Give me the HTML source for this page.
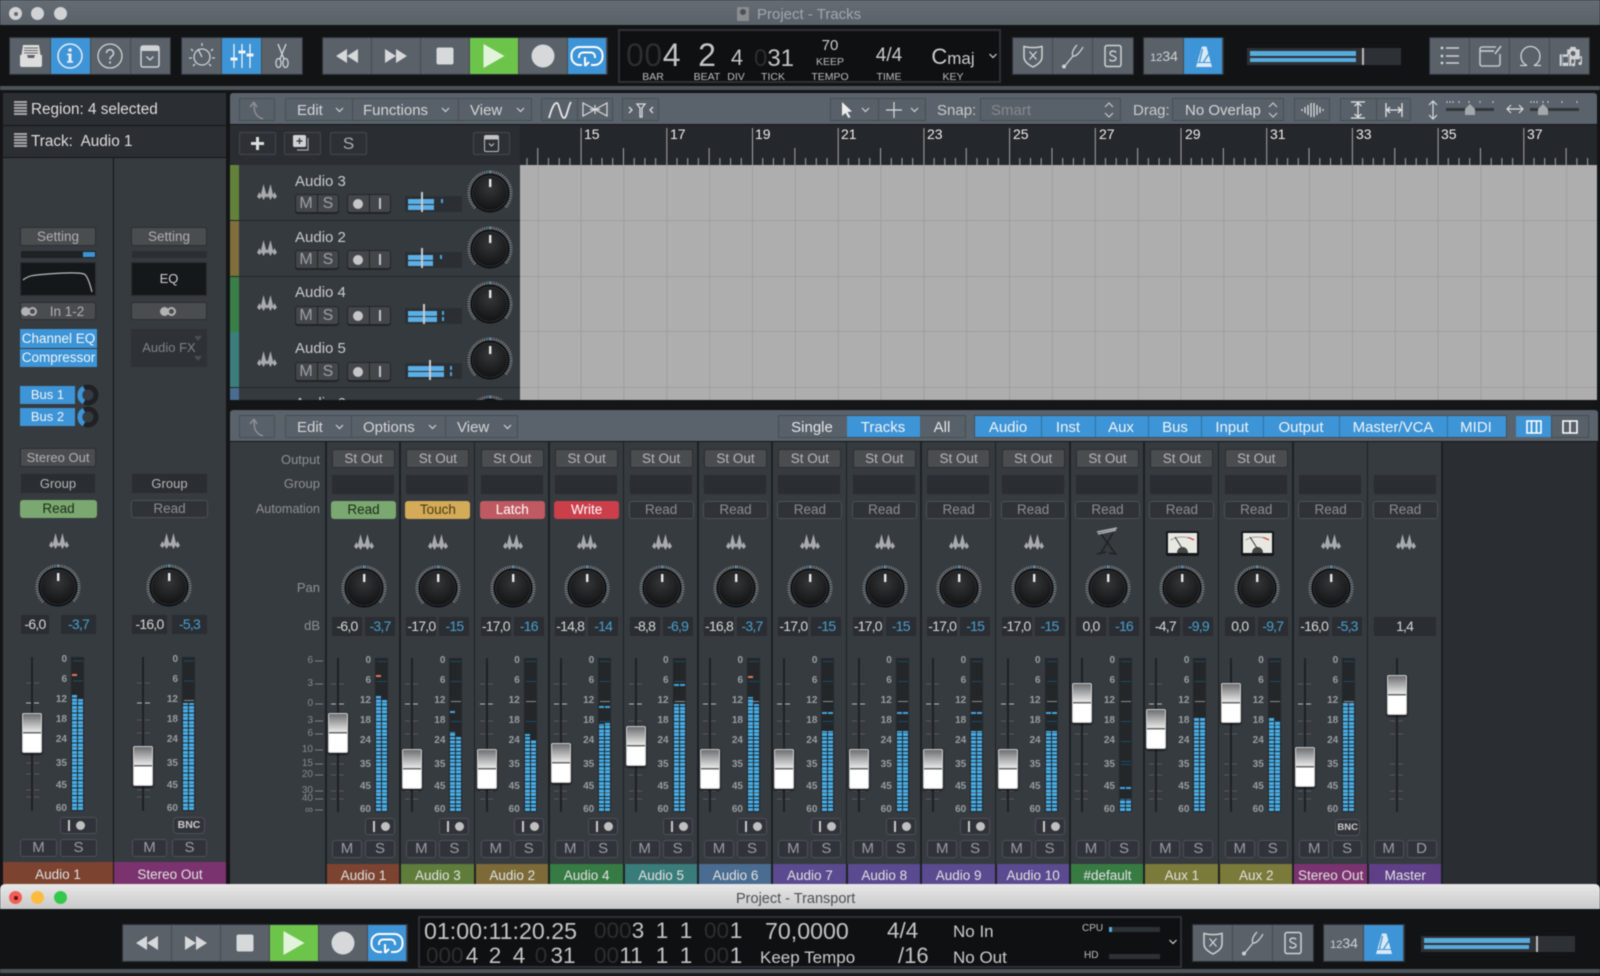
<!DOCTYPE html>
<html><head><meta charset="utf-8"><title>Project - Tracks</title>
<style>
html,body{margin:0;padding:0;width:1600px;height:976px;overflow:hidden;background:#141517;font:13px "Liberation Sans",sans-serif;color:#bbb}
body{filter:blur(.4px)}
div,span,svg,b,i{position:absolute;display:block;box-sizing:border-box}
i{font-style:normal}
svg{overflow:visible}
.t{white-space:nowrap;line-height:1}
.c{transform:translateX(-50%)}
.d{color:#2c2e30}
.g{background:#5a6169;box-shadow:0 0 0 1px #2e3135}
.b{top:0;bottom:0;border-right:1px solid #454b52}
.bl{background:#3d94d6}
.gn{background:#6cc54a}
.bar{background:#5a626b}
.tg{background:#586069;border:1px solid #474d54;height:23px}
.sp{top:0;bottom:0;width:1px;background:#474d54}
.lb{font-size:15px;color:#d5d7d9;line-height:1;white-space:nowrap}
.cb{background:#2d3135;border:1px solid #43484d;border-radius:2px}
.r{background:#363b40;height:1px}
.ch{top:0;width:74px;height:0}
.out{left:6px;top:449px;width:63px;height:19px;background:#4a4d50;border:1px solid #2b2e31;border-radius:2px;text-align:center;line-height:17px;color:#b6b8ba;font-size:13.5px}
.grp{left:6px;top:475px;width:62px;height:19px;background:#2a2e32}
.au{left:5px;top:501px;width:65px;height:18px;border-radius:3px;text-align:center;line-height:18px;font-size:13.5px}
.rd0{background:#2f3337;box-shadow:inset 0 0 0 1px #4b5055;color:#8a8e92}
.rd{background:#7aa870;color:#1c2b18}
.to{background:#d4ab58;color:#4c3a12}
.la{background:#bf5a62;color:#fff}
.wr{background:#cb3f4a;color:#fff}
.wv{left:28px;top:534px;width:20px;height:16px}
.kn{left:15px;top:565px;width:46px;height:46px}
.db{top:617px;height:19px;background:#2a2e32;text-align:center;line-height:19px;font-size:14px;letter-spacing:-.8px}
.a1{left:6px;width:30px;color:#d6d8da}
.a2{left:39px;width:30px;color:#4a9fd0}
.fl{left:11px;top:658px;width:2px;height:154px;background:#1e2124}
.ft{left:4px;top:658px;width:16px;height:154px}
.cap{left:2px;width:20px;height:40px;border-radius:2px;border:1px solid #cfcfcf;background:linear-gradient(#6e6f71 0,#e8e8e8 47%,#66686a 48%,#66686a 51%,#fff 52%,#fff 100%);box-shadow:0 1px 2px #000}
.sc{left:0;top:0;width:45px;height:0}
.sc i{right:0;font-size:10px;font-weight:bold;color:#9a9ea2;line-height:10px;top:656px}
.sc i:nth-child(2){top:676px}.sc i:nth-child(3){top:696px}.sc i:nth-child(4){top:716px}.sc i:nth-child(5){top:736px}.sc i:nth-child(6){top:760px}.sc i:nth-child(7){top:782px}.sc i:nth-child(8){top:805px}
.m{left:49px;top:658px;width:13px;height:154px;background:#23272a}
.m b{left:1px;width:5px;bottom:1px;background:repeating-linear-gradient(to top,#4aaee6 0 2.8px,#1a2a35 2.8px 3.75px)}
.m b.rr{left:7px}
.m svg{left:0;top:0;width:13px;height:154px}
.p{left:1px;width:5px;height:2px;background:#46a4dc}
.p.rr{left:7px}
.p.red{background:#e8745e}
.ir{left:39px;top:818px;width:30px;height:17px;background:#30343a;border:1px solid #4c5156;border-radius:3px}
.ir::before{content:"";position:absolute;left:7px;top:2px;width:2px;height:11px;background:#c8c8c8}
.ir::after{content:"";position:absolute;left:15px;top:3px;width:9px;height:9px;border-radius:50%;background:#c0c0c0}
.ms{top:840px;width:30px;height:18px;background:#30343a;border:1px solid #4c5156;border-radius:3px;text-align:center;line-height:16px;font-size:15px;color:#999da1}
.mm{left:6px}.ss{left:39px}
.lbl{left:0;top:864px;width:74px;height:20px;text-align:center;line-height:24px;color:#e2e2e2;font-size:13.5px;border-left:1px solid #222}
.dv{top:442px;width:2px;height:442px;background:#1e2023}
.bnc{background:#30343a;border:1px solid #4c5156;border-radius:4px;text-align:center;font-weight:bold;font-size:10.5px;color:#ccc;line-height:15px}
.row{left:239px;width:281px;height:55px;background:#353a3f}
.rs{left:230px;width:9px;height:55px}
.tn{font-size:15px;color:#c9cbcd;line-height:1;white-space:nowrap}
.pb{background:#43474c;border:1px solid #222528;border-radius:3px;box-shadow:0 1px 0 #0006}
.tf{left:405px;width:57px;height:16px;background:#2b2f33}
.tf u{position:absolute;left:3px;height:5px;background:#5caee6;display:block}
.tm{width:2px;height:4px;background:#4aa4dc}
.ins{left:20px;background:#4a4d50;border:1px solid #2b2e31;border-radius:2px;text-align:center;color:#aeb0b2;font-size:13.5px}
.bbl{background:#3d94d6;color:#eef5fa;text-align:center;font-size:14px}
.lab2{font-size:13px;color:#8d9195;right:0;text-align:right;line-height:1;white-space:nowrap}
</style></head><body>
<svg width="0" height="0" style="left:0;top:0">
<defs>
<radialGradient id="kg" cx="50%" cy="35%" r="65%"><stop offset="0" stop-color="#343638"/><stop offset="1" stop-color="#121314"/></radialGradient>
<symbol id="wave" viewBox="0 0 20 16"><path fill="#a8abae" d="M0 12.500L2.500 8l2 4.500-2 2.500zM3.800 11L6.500 0l3 11-3 5zM8.800 12l1.200-3 1.200 3-1.200 2zM10.500 11L13.500 0l2.700 11-2.700 5zM15.500 12.500L17.500 8l2.500 4.500L17.500 15z"/></symbol>
<symbol id="knob" viewBox="0 0 46 46"><path d="M8.150 37.850A21 21 0 1 1 37.850 37.850" fill="none" stroke="#85898d" stroke-width="3.200" stroke-dasharray="1 1.300"/><rect x="22.300" y="0.500" width="1.400" height="3.500" fill="#4a9fd0"/><circle cx="23" cy="23" r="19.500" fill="#0b0c0d"/><circle cx="23" cy="23" r="17.500" fill="url(#kg)" stroke="#3b3d3f" stroke-width=".6"/><rect x="22" y="9" width="2.400" height="8" fill="#e8e8e8"/></symbol>
<symbol id="chev" viewBox="0 0 9 6"><path d="M1 1l3.500 3.500L8 1" fill="none" stroke="#cfd2d5" stroke-width="1.200"/></symbol>
<symbol id="ud" viewBox="0 0 10 18"><path d="M1 6l4-4 4 4M1 12l4 4 4-4" fill="none" stroke="#c4c7ca" stroke-width="1.200"/></symbol>
<symbol id="back" viewBox="0 0 24 24"><path d="M9 4L5 9M9 4l3 5M9 4c0 8 0 14 9 17" fill="none" stroke="#8b9096" stroke-width="1.500"/></symbol>
<symbol id="rew" viewBox="0 0 28 28"><path fill="#d6d8da" d="M14 7v14L3 14zM25 7v14l-11-7z"/></symbol>
<symbol id="ff" viewBox="0 0 28 28"><path fill="#d6d8da" d="M3 7v14l11-7zM14 7v14l11-7z"/></symbol>
<symbol id="stop" viewBox="0 0 28 28"><rect x="5.500" y="5.500" width="17" height="17" rx="2" fill="#d6d8da"/></symbol>
<symbol id="play" viewBox="0 0 28 28"><path d="M3.500 2v24l21-12z" fill="#e2f3dc"/></symbol>
<symbol id="rec" viewBox="0 0 28 28"><circle cx="14" cy="14" r="11.500" fill="#d6d8da"/></symbol>
<symbol id="loop" viewBox="0 0 34 24"><path d="M12 21H9.500a8 8 0 0 1-8-8V11a8 8 0 0 1 8-8h15a8 8 0 0 1 8 8v2a8 8 0 0 1-8 8H21" fill="none" stroke="#fff" stroke-width="2"/><path d="M9 14v-1.500a4 4 0 0 1 4-4h8a4 4 0 0 1 4 4V14M15 13v9M15 22l4-4" fill="none" stroke="#fff" stroke-width="2"/></symbol>
<symbol id="shield" viewBox="0 0 28 28"><path d="M5 4.500c6 1.500 12 1.500 18 0V15c0 5-5 8-9 10-4-2-9-5-9-10z" fill="none" stroke="#d0d3d6" stroke-width="1.500"/><path d="M10.500 9.500l7 8M17.500 9.500l-7 8" stroke="#d0d3d6" stroke-width="1.300"/></symbol>
<symbol id="fork" viewBox="0 0 28 28"><path d="M5 25l9-11M14 14c-2-3 1-8 4-11M14 14c3 1 8-5 10-9" fill="none" stroke="#cfd2d5" stroke-width="1.300"/><circle cx="5" cy="24.500" r="2" fill="#cfd2d5"/></symbol>
<symbol id="sq" viewBox="0 0 28 28"><rect x="6" y="3.500" width="16" height="21" rx="2" fill="none" stroke="#d0d3d6" stroke-width="1.500"/><path d="M17 10.500c-1-2-6-2-6 1s6 2 6 5-5.500 3-6.500 1" fill="none" stroke="#d0d3d6" stroke-width="1.400"/></symbol>
<symbol id="metro" viewBox="0 0 28 28"><path d="M12 4.500L6 25h16L16.500 4.500z" fill="#d9e9f6"/><path d="M12.500 7l-3 13M13.500 20L22 7" stroke="#3d94d6" stroke-width="1.300" fill="none"/><path d="M7 20.500h14" stroke="#3d94d6" stroke-width="1"/></symbol>
</defs></svg>

<!-- main title bar -->
<div style="left:0;top:0;width:1600px;height:25px;background:linear-gradient(#656c74,#5a6169)"></div>
<div style="left:0;top:25px;width:1600px;height:61px;background:#121314"></div>
<div style="left:0;top:86px;width:1600px;height:4px;background:#4d5359"></div>
<div style="left:9px;top:7px;width:13px;height:13px;border-radius:50%;background:#d0d2d4"></div><div style="left:13.500px;top:11.500px;width:4px;height:4px;border-radius:50%;background:#66696c"></div>
<div style="left:31px;top:7px;width:13px;height:13px;border-radius:50%;background:#d0d2d4"></div>
<div style="left:54px;top:7px;width:13px;height:13px;border-radius:50%;background:#d0d2d4"></div>
<div style="left:737px;top:7px;width:12px;height:14px;background:#8a8d90;border-radius:1px"></div><div style="left:740px;top:9px;width:6px;height:6px;background:#4d5054;border-radius:50%"></div>
<div class="t" style="left:757px;top:7px;font-size:15px;color:#a3a7ab">Project - Tracks</div>

<!-- toolbar left -->
<div class="g" style="left:10px;top:38px;width:160px;height:36px">
<div class="b" style="left:0;width:41px"></div><div class="b bl" style="left:41px;width:40px"></div><div class="b" style="left:81px;width:40px"></div>
</div>
<svg style="left:17px;top:42px;width:28px;height:28px" viewBox="0 0 28 28"><path d="M6 3h16l1.500 10h-19z" fill="#ddd"/><path d="M7 6h14M7 8.500h14M7 11h14" stroke="#666"/><path d="M3 13h7l1 3h6l1-3h7v10a2 2 0 0 1-2 2H5a2 2 0 0 1-2-2z" fill="#ddd"/></svg>
<svg style="left:56px;top:42px;width:28px;height:28px" viewBox="0 0 28 28"><circle cx="14" cy="14" r="12" fill="none" stroke="#e4edf5" stroke-width="1.500"/><circle cx="14" cy="8" r="1.800" fill="#e4edf5"/><path d="M11 11.500h4.500V19H17v1.800h-6V19h1.500v-5.700H11z" fill="#e4edf5"/></svg>
<svg style="left:96px;top:42px;width:28px;height:28px" viewBox="0 0 28 28"><circle cx="14" cy="14" r="12" fill="none" stroke="#cfd2d5" stroke-width="1.300"/><path d="M10.500 11a3.500 3.500 0 1 1 5.500 3c-1.200.8-2 1.500-2 3.500" fill="none" stroke="#cfd2d5" stroke-width="1.500"/><circle cx="14" cy="20.500" r="1.100" fill="#cfd2d5"/></svg>
<svg style="left:136px;top:42px;width:28px;height:28px" viewBox="0 0 28 28"><rect x="5" y="4" width="18" height="21" rx="2" fill="none" stroke="#cfd2d5" stroke-width="1.500"/><rect x="5" y="4" width="18" height="5" fill="#cfd2d5"/><path d="M10.500 14.500l3.500 3.500 3.500-3.500" fill="none" stroke="#cfd2d5" stroke-width="1.300"/></svg>

<div class="g" style="left:182px;top:38px;width:120px;height:36px">
<div class="b" style="left:0;width:40px"></div><div class="b bl" style="left:40px;width:40px"></div>
</div>
<svg style="left:188px;top:42px;width:28px;height:28px" viewBox="0 0 28 28"><circle cx="14" cy="15" r="8" fill="none" stroke="#cfd2d5" stroke-width="1.300"/><path d="M14 15L10 7M14 1v3M3 7l2 2M25 7l-2 2M1 16h3M24 16h3M5 24l2-2M23 24l-2-2" stroke="#cfd2d5" stroke-width="1.300"/></svg>
<svg style="left:228px;top:42px;width:28px;height:28px" viewBox="0 0 28 28"><path d="M6 2v24M14 2v24M22 2v24" stroke="#f0f4f8" stroke-width="1.300"/><path d="M2.500 17h7M10.500 10h7M18.500 13h7" stroke="#f0f4f8" stroke-width="3"/></svg>
<svg style="left:268px;top:42px;width:28px;height:28px" viewBox="0 0 28 28"><path d="M10 2l6 15M18 2l-6 15" stroke="#cfd2d5" stroke-width="1.400"/><ellipse cx="10.500" cy="21" rx="2.600" ry="4.500" fill="none" stroke="#cfd2d5" stroke-width="1.300"/><ellipse cx="17.500" cy="21" rx="2.600" ry="4.500" fill="none" stroke="#cfd2d5" stroke-width="1.300"/></svg>

<div class="g" style="left:323px;top:38px;width:284px;height:36px">
<div class="b" style="left:0;width:49px"></div><div class="b" style="left:49px;width:49px"></div><div class="b" style="left:98px;width:49px"></div><div class="b gn" style="left:147px;width:49px"></div><div class="b" style="left:196px;width:49px"></div><div class="b bl" style="left:245px;width:39px"></div>
</div>
<svg style="left:333px;top:42px;width:28px;height:28px"><use href="#rew"/></svg>
<svg style="left:382px;top:42px;width:28px;height:28px"><use href="#ff"/></svg>
<svg style="left:431px;top:42px;width:28px;height:28px"><use href="#stop"/></svg>
<svg style="left:480px;top:42px;width:28px;height:28px"><use href="#play"/></svg>
<svg style="left:529px;top:42px;width:28px;height:28px"><use href="#rec"/></svg>
<svg style="left:570px;top:44px;width:34px;height:24px"><use href="#loop"/></svg>

<!-- display -->
<div style="left:618px;top:29px;width:383px;height:54px;border:2px solid #2e3135;background:#0f1011"></div>
<div class="t" style="left:626px;top:39px;font-size:32px;letter-spacing:.6px;color:#2c2e30">00<span style="position:static;display:inline;color:#c2c4c6">4</span></div>
<div class="t c" style="left:707px;top:39px;font-size:32px;color:#c2c4c6">2</div>
<div class="t c" style="left:737px;top:47px;font-size:22px;color:#c2c4c6">4</div>
<div class="t c" style="left:774px;top:47px;font-size:24px;color:#2c2e30">0<span style="position:static;display:inline;color:#c2c4c6">31</span></div>
<div class="t c" style="left:653px;top:72px;font-size:10.500px;color:#bcbec0">BAR</div>
<div class="t c" style="left:707px;top:72px;font-size:10.500px;color:#bcbec0">BEAT</div>
<div class="t c" style="left:736px;top:72px;font-size:10.500px;color:#bcbec0">DIV</div>
<div class="t c" style="left:773px;top:72px;font-size:10.500px;color:#bcbec0">TICK</div>
<div class="t c" style="left:830px;top:38px;font-size:15px;color:#c9cbcd">70</div>
<div class="t c" style="left:830px;top:57px;font-size:10.500px;color:#bcbec0">KEEP</div>
<div class="t c" style="left:830px;top:72px;font-size:10.500px;color:#bcbec0">TEMPO</div>
<div class="t c" style="left:889px;top:46px;font-size:19px;color:#c9cbcd">4/4</div>
<div class="t c" style="left:889px;top:72px;font-size:10.500px;color:#bcbec0">TIME</div>
<div class="t c" style="left:953px;top:46px;font-size:22px;color:#c9cbcd">C<span style="position:static;display:inline;font-size:17px">maj</span></div>
<div class="t c" style="left:953px;top:72px;font-size:10.500px;color:#bcbec0">KEY</div>
<svg style="left:988px;top:53px;width:10px;height:6px"><use href="#chev"/></svg>

<div class="g" style="left:1013px;top:38px;width:120px;height:36px"><div class="b" style="left:0;width:40px"></div><div class="b" style="left:40px;width:40px"></div></div>
<svg style="left:1019px;top:42px;width:28px;height:28px"><use href="#shield"/></svg>
<svg style="left:1059px;top:42px;width:28px;height:28px"><use href="#fork"/></svg>
<svg style="left:1099px;top:42px;width:28px;height:28px"><use href="#sq"/></svg>
<div class="g" style="left:1144px;top:38px;width:79px;height:36px"><div class="b" style="left:0;width:40px"></div><div class="b bl" style="left:40px;width:39px"></div></div>
<div class="t c" style="left:1164px;top:49px;font-size:14px;color:#d0d3d6"><span style="position:static;display:inline;font-size:11px">12</span>34</div>
<svg style="left:1190px;top:42px;width:28px;height:28px"><use href="#metro"/></svg>
<div style="left:1247px;top:48px;width:154px;height:17px;background:#2d3135"></div>
<div style="left:1250px;top:51px;width:106px;height:5px;background:#58acdc"></div>
<div style="left:1250px;top:58px;width:106px;height:4px;background:#58acdc"></div>
<div style="left:1362px;top:48px;width:2px;height:17px;background:#bbb"></div>

<div class="g" style="left:1430px;top:38px;width:159px;height:36px"><div class="b" style="left:0;width:40px"></div><div class="b" style="left:40px;width:40px"></div><div class="b" style="left:80px;width:40px"></div></div>
<svg style="left:1436px;top:42px;width:28px;height:28px" viewBox="0 0 28 28"><path d="M10 6h13M10 14h13M10 21h13" stroke="#cfd2d5" stroke-width="1.500"/><circle cx="6" cy="6" r="1.400" fill="#cfd2d5"/><circle cx="6" cy="14" r="1.400" fill="#cfd2d5"/><circle cx="6" cy="21" r="1.400" fill="#cfd2d5"/></svg>
<svg style="left:1476px;top:42px;width:28px;height:28px" viewBox="0 0 28 28"><path d="M24 12v10a2 2 0 0 1-2 2H6a2 2 0 0 1-2-2V7a2 2 0 0 1 2-2h14" fill="none" stroke="#c2c5c8" stroke-width="1.600"/><path d="M4 9h14M19 12l6-8" stroke="#c2c5c8" stroke-width="1.800"/></svg>
<svg style="left:1516px;top:42px;width:28px;height:28px" viewBox="0 0 28 28"><path d="M4 23.500h7c-4-2-6-5.500-6-9.500a9.500 9.500 0 0 1 19 0c0 4-2 7.500-6 9.500h7" fill="none" stroke="#cfd2d5" stroke-width="1.300"/></svg>
<svg style="left:1558px;top:44px;width:25px;height:24px" viewBox="0 0 30 28"><path d="M11 6h3l1-3h6l1 3h4v12H11z" fill="#cfd2d5"/><circle cx="18" cy="11" r="3" fill="#5a6169"/><rect x="2" y="12" width="14" height="14" fill="#cfd2d5"/><path d="M5 12v14M13 12v14" stroke="#5a6169"/><rect x="6" y="15" width="6" height="7" fill="#5a6169"/><path d="M20 24V17l8-2v8" fill="none" stroke="#cfd2d5" stroke-width="1.500"/><circle cx="18.500" cy="24.500" r="2" fill="#cfd2d5"/><circle cx="26.500" cy="23" r="2" fill="#cfd2d5"/></svg>

<!-- inspector -->
<div style="left:3px;top:93px;width:223px;height:32px;background:#2b2f33"></div>
<div style="left:3px;top:126px;width:223px;height:31px;background:#2b2f33"></div>
<svg style="left:14px;top:101px;width:13px;height:15px"><path d="M0 1h13M0 4h13M0 7h13M0 10h13M0 13h13" stroke="#a5a7a9" stroke-width="2"/></svg>
<svg style="left:14px;top:133px;width:13px;height:15px"><path d="M0 1h13M0 4h13M0 7h13M0 10h13M0 13h13" stroke="#a5a7a9" stroke-width="2"/></svg>
<div class="t" style="left:31px;top:102px;font-size:15.300px;color:#dcdddf">Region: 4 selected</div>
<div class="t" style="left:31px;top:134px;font-size:15.300px;color:#dcdddf">Track:&nbsp; Audio 1</div>

<div style="left:3px;top:158px;width:110px;height:726px;background:#363b40"></div>
<div style="left:114px;top:158px;width:112px;height:726px;background:#363b40"></div>

<div class="ins" style="top:227px;width:76px;height:19px;line-height:17px">Setting</div>
<div style="left:21px;top:251px;width:75px;height:7px;background:#1f2225"></div><div style="left:83px;top:252px;width:12px;height:5px;background:#3d94d6"></div>
<div style="left:20px;top:262px;width:76px;height:34px;background:#15181b;border:1px solid #2b2e31"></div>
<svg style="left:23px;top:270px;width:70px;height:24px"><path d="M0 10c6-5 12-5 25-6s30-2 36 0c3 1 6 10 8 18" fill="none" stroke="#b9bcbf" stroke-width="1.200"/></svg>
<div class="ins" style="top:302px;width:76px;height:18px;line-height:17px;padding-left:18px">In 1-2</div>
<div style="left:21px;top:307px;width:9px;height:9px;border-radius:50%;background:#b0b2b4"></div><div style="left:28px;top:307px;width:9px;height:9px;border-radius:50%;border:2px solid #b0b2b4"></div>
<div class="bbl" style="left:20px;top:329px;width:77px;height:19px;line-height:19px;font-size:13.500px">Channel EQ</div>
<div class="bbl" style="left:20px;top:349px;width:77px;height:18px;line-height:18px;font-size:13.500px">Compressor</div>
<div class="bbl" style="left:20px;top:386px;width:55px;height:18px;line-height:18px;font-size:13px">Bus 1</div>
<div class="bbl" style="left:20px;top:408px;width:55px;height:18px;line-height:18px;font-size:13px">Bus 2</div>
<svg style="left:77px;top:385px;width:22px;height:42px"><circle cx="11" cy="10" r="8" fill="none" stroke="#1f2124" stroke-width="5"/><path d="M7 3A8 8 0 0 0 7 17" fill="none" stroke="#3d94d6" stroke-width="5"/><circle cx="11" cy="32" r="8" fill="none" stroke="#1f2124" stroke-width="5"/><path d="M7 25A8 8 0 0 0 7 39" fill="none" stroke="#3d94d6" stroke-width="5"/></svg>
<div class="ins" style="top:448px;width:76px;height:19px;line-height:17px;font-size:13px">Stereo Out</div>
<div style="left:21px;top:474px;width:74px;height:19px;background:#2a2e32;text-align:center;line-height:19px;color:#b5b7b9;font-size:13px">Group</div>
<div class="au rd" style="left:20px;top:500px;width:77px">Read</div>
<svg style="left:49px;top:533px;width:20px;height:16px"><use href="#wave"/></svg>
<svg style="left:35px;top:564px;width:46px;height:46px"><use href="#knob"/></svg>
<div class="db" style="left:21px;top:615px;width:28px;color:#d6d8da">-6,0</div>
<div class="db" style="left:61px;top:615px;width:35px;color:#4a9fd0">-3,7</div>
<div class="fl" style="left:31px;top:657px"></div>
<svg style="left:25px;top:657px;width:16px;height:154px"><path d="M1 26h5M9 26h5M1 63h5M9 63h5M1 76h5M9 76h5M1 106h5M9 106h5M1 117h5M9 117h5M1 133h5M9 133h5M1 140h5M9 140h5" stroke="#565a5e"/><path d="M1 46h5M9 46h5" stroke="#bbb"/></svg>
<div class="cap" style="left:22px;top:713px"></div>
<div style="left:0;top:-1px;width:0;height:0"><div class="sc" style="left:22px;width:45px"><i>0</i><i>6</i><i>12</i><i>18</i><i>24</i><i>35</i><i>45</i><i>60</i></div></div>
<div class="m" style="left:71px;top:657px"><svg><path d="M2 4h10M2 24h10" stroke="#1d4a66"/></svg><b style="top:38px"></b><b class="rr" style="top:42px"></b><div class="p red" style="top:17px"></div></div>
<div class="ir" style="left:60px;top:817px;width:37px;height:17px"></div>
<div class="ms" style="left:20px;top:839px;width:37px">M</div><div class="ms" style="left:60px;top:839px;width:37px">S</div>
<div class="lbl" style="left:3px;top:862px;width:110px;height:22px;background:#7c4330;line-height:26px;border:0">Audio 1</div>

<div class="ins" style="left:131px;top:227px;width:76px;height:19px;line-height:17px">Setting</div>
<div style="left:132px;top:251px;width:75px;height:7px;background:#2b2f33"></div>
<div style="left:131px;top:262px;width:76px;height:34px;background:#15181b;border:1px solid #2b2e31;text-align:center;line-height:32px;color:#cdcfd1;font-size:13px">EQ</div>
<div class="ins" style="left:131px;top:302px;width:76px;height:18px"></div>
<div style="left:160px;top:307px;width:9px;height:9px;border-radius:50%;background:#b0b2b4"></div><div style="left:167px;top:307px;width:9px;height:9px;border-radius:50%;border:2px solid #b0b2b4"></div>
<div style="left:131px;top:329px;width:76px;height:38px;background:#2e3236;text-align:center;line-height:38px;color:#7e8286;font-size:13px">Audio FX</div>
<svg style="left:194px;top:336px;width:9px;height:26px"><path d="M0 0h8l-4 5zM0 20h8l-4 5z" fill="#4a4e52"/></svg>
<div style="left:132px;top:474px;width:75px;height:19px;background:#2a2e32;text-align:center;line-height:19px;color:#b5b7b9;font-size:13px">Group</div>
<div class="au rd0" style="left:131px;top:500px;width:77px">Read</div>
<svg style="left:160px;top:533px;width:20px;height:16px"><use href="#wave"/></svg>
<svg style="left:146px;top:564px;width:46px;height:46px"><use href="#knob"/></svg>
<div class="db" style="left:132px;top:615px;width:35px;color:#d6d8da">-16,0</div>
<div class="db" style="left:172px;top:615px;width:35px;color:#4a9fd0">-5,3</div>
<div class="fl" style="left:142px;top:657px"></div>
<svg style="left:136px;top:657px;width:16px;height:154px"><path d="M1 26h5M9 26h5M1 63h5M9 63h5M1 76h5M9 76h5M1 106h5M9 106h5M1 117h5M9 117h5M1 133h5M9 133h5M1 140h5M9 140h5" stroke="#565a5e"/><path d="M1 46h5M9 46h5" stroke="#bbb"/></svg>
<div class="cap" style="left:133px;top:746px"></div>
<div style="left:0;top:-1px;width:0;height:0"><div class="sc" style="left:133px"><i>0</i><i>6</i><i>12</i><i>18</i><i>24</i><i>35</i><i>45</i><i>60</i></div></div>
<div class="m" style="left:182px;top:657px"><svg><path d="M2 4h10M2 24h10" stroke="#1d4a66"/><path d="M2 43.500h10" stroke="#8a8d90"/></svg><b style="top:46px"></b><b class="rr" style="top:46px"></b></div>
<div class="bnc" style="left:173px;top:817px;width:32px;height:17px">BNC</div>
<div class="ms" style="left:132px;top:839px;width:35px">M</div><div class="ms" style="left:172px;top:839px;width:35px">S</div>
<div class="lbl" style="left:114px;top:862px;width:112px;height:22px;background:#7b3370;line-height:26px;border:0">Stereo Out</div>

<!-- arrangement toolbar -->
<div class="bar" style="left:230px;top:93px;width:1367px;height:31px;border-radius:3px 3px 0 0"></div>
<div class="tg" style="left:239px;top:98px;width:36px"></div><svg style="left:245px;top:98px;width:24px;height:24px"><use href="#back"/></svg>
<div class="tg" style="left:285px;top:98px;width:247px"><div class="sp" style="left:66px"></div><div class="sp" style="left:172px"></div></div>
<div class="lb" style="left:297px;top:103px">Edit</div><svg style="left:335px;top:107px;width:9px;height:6px"><use href="#chev"/></svg>
<div class="lb" style="left:363px;top:103px">Functions</div><svg style="left:441px;top:107px;width:9px;height:6px"><use href="#chev"/></svg>
<div class="lb" style="left:470px;top:103px">View</div><svg style="left:516px;top:107px;width:9px;height:6px"><use href="#chev"/></svg>
<div class="tg" style="left:541px;top:98px;width:72px"><div class="sp" style="left:35px"></div></div>
<svg style="left:547px;top:100px;width:26px;height:20px"><path d="M2 18C6 4 8 3 10 3s4 15 7 15S21 6 24 2" fill="none" stroke="#e8e8e8" stroke-width="1.800"/></svg>
<svg style="left:582px;top:101px;width:26px;height:17px"><path d="M1 2l12 6.500L25 2v13L13 8.500 1 15zM8 8.500h10M13 4v9" fill="none" stroke="#dadcde" stroke-width="1.200"/></svg>
<div class="tg" style="left:622px;top:98px;width:37px"></div>
<svg style="left:628px;top:102px;width:26px;height:16px"><path d="M1 5l3 3-3 3M25 5l-3 3 3 3M9 2h8l-3 4v9h-2V6z" fill="none" stroke="#dadcde" stroke-width="1.300"/></svg>

<div class="tg" style="left:830px;top:98px;width:96px"><div class="sp" style="left:47px"></div></div>
<svg style="left:841px;top:102px;width:11px;height:16px"><path d="M1 0v14l3.500-3 3 5 2-1-3-5 4.500-.5z" fill="#eee"/></svg>
<svg style="left:861px;top:107px;width:9px;height:6px"><use href="#chev"/></svg>
<svg style="left:886px;top:102px;width:16px;height:16px"><path d="M8 0v16M0 8h16" stroke="#dadcde" stroke-width="1.200"/></svg>
<svg style="left:910px;top:107px;width:9px;height:6px"><use href="#chev"/></svg>
<div class="lb" style="left:937px;top:103px;color:#c9cbcd">Snap:</div>
<div class="tg" style="left:980px;top:98px;width:141px"></div>
<div class="lb" style="left:991px;top:103px;color:#858a8f">Smart</div>
<svg style="left:1104px;top:101px;width:10px;height:18px"><use href="#ud"/></svg>
<div class="lb" style="left:1133px;top:103px;color:#c9cbcd">Drag:</div>
<div class="tg" style="left:1172px;top:98px;width:112px"></div>
<div class="lb" style="left:1185px;top:103px">No Overlap</div>
<svg style="left:1268px;top:101px;width:10px;height:18px"><use href="#ud"/></svg>
<div class="tg" style="left:1294px;top:98px;width:36px"></div>
<svg style="left:1301px;top:102px;width:23px;height:16px"><path d="M1 7v2M4 5v6M7 3v10M10 1v14M13 1v14M16 3v10M19 5v6M22 7v2" stroke="#dadcde" stroke-width="1.300"/></svg>
<div class="tg" style="left:1340px;top:98px;width:71px"><div class="sp" style="left:35px"></div></div>
<svg style="left:1348px;top:101px;width:20px;height:18px"><path d="M3 1h14M3 17h14M10 2v14M6.500 5L10 2l3.500 3M6.500 13L10 16l3.500-3" fill="none" stroke="#e2e4e6" stroke-width="1.300"/></svg>
<svg style="left:1385px;top:102px;width:18px;height:16px"><path d="M1 1v14M17 1v14M2 8h14M5 5L2 8l3 3M13 5l3 3-3 3" fill="none" stroke="#e2e4e6" stroke-width="1.300"/></svg>
<svg style="left:1428px;top:100px;width:10px;height:20px"><path d="M5 1v18M1 5l4-4 4 4M1 15l4 4 4-4" fill="none" stroke="#dadcde" stroke-width="1.200"/></svg>
<div style="left:1446px;top:108px;width:48px;height:3px;background:#33373b"></div>
<svg style="left:1446px;top:100px;width:48px;height:16px"><path d="M1 1v2M4 1v2M7 1v2M13 1v2M23 1v2M34 1v2M47 1v2" stroke="#d0d2d4"/><path d="M19 15h10v-6l-5-5-5 5z" fill="#a5a8ab"/></svg>
<svg style="left:1507px;top:103px;width:16px;height:12px"><path d="M0 6h16M4 2L0 6l4 4M12 2l4 4-4 4" fill="none" stroke="#dadcde" stroke-width="1.200"/></svg>
<div style="left:1530px;top:108px;width:49px;height:3px;background:#33373b"></div>
<svg style="left:1530px;top:100px;width:49px;height:16px"><path d="M1 1v2M4 1v2M7 1v2M13 1v2M18 1v2M32 1v2M47 1v2" stroke="#d0d2d4"/><path d="M8 15h10v-6l-5-5-5 5z" fill="#a5a8ab"/></svg>

<!-- track header & ruler -->
<div style="left:230px;top:125px;width:290px;height:40px;background:#2a2e32"></div>
<div class="cb" style="left:239px;top:132px;width:37px;height:23px"></div>
<svg style="left:250px;top:136px;width:15px;height:15px"><path d="M7.500 1v13M1 7.500h13" stroke="#ddd" stroke-width="3"/></svg>
<div class="cb" style="left:284px;top:132px;width:37px;height:23px"></div>
<svg style="left:293px;top:135px;width:20px;height:17px"><rect x="0" y="0" width="13" height="12" rx="1.500" fill="#d0d2d4"/><path d="M6.500 3v6M3.500 6h6" stroke="#333" stroke-width="1.300"/><path d="M15 3v12H4" fill="none" stroke="#aaa" stroke-width="1.200"/></svg>
<div class="cb" style="left:330px;top:132px;width:37px;height:23px;text-align:center;line-height:21px;font-size:17px;color:#a9acaf">S</div>
<div class="cb" style="left:473px;top:132px;width:37px;height:23px"></div>
<svg style="left:484px;top:135px;width:15px;height:17px"><rect x=".5" y=".5" width="14" height="16" rx="1.500" fill="none" stroke="#c0c2c4"/><rect x=".5" y=".5" width="14" height="4" fill="#c0c2c4"/><path d="M5 8.500l2.500 2.500 2.500-2.500" fill="none" stroke="#c0c2c4" stroke-width="1.100"/></svg>
<div style="left:520px;top:125px;width:1077px;height:40px;background:#24272b"></div>
<svg style="left:520px;top:125px;width:1077px;height:40px"><defs><pattern id="rl" patternUnits="userSpaceOnUse" x="60.600" y="0" width="85.700" height="40"><path d="M.5 3v37M10.700 33v7M21.400 33v7M32.100 33v7M42.850 23v17M53.600 33v7M64.300 33v7M75 33v7" stroke="#a5a8ab" stroke-width="1"/></pattern></defs><rect width="1077" height="40" fill="url(#rl)"/></svg>
<div class="t" style="left:584px;top:127px;font-size:14px;color:#eceded">15</div>
<div class="t" style="left:670px;top:127px;font-size:14px;color:#eceded">17</div>
<div class="t" style="left:755px;top:127px;font-size:14px;color:#eceded">19</div>
<div class="t" style="left:841px;top:127px;font-size:14px;color:#eceded">21</div>
<div class="t" style="left:927px;top:127px;font-size:14px;color:#eceded">23</div>
<div class="t" style="left:1013px;top:127px;font-size:14px;color:#eceded">25</div>
<div class="t" style="left:1099px;top:127px;font-size:14px;color:#eceded">27</div>
<div class="t" style="left:1185px;top:127px;font-size:14px;color:#eceded">29</div>
<div class="t" style="left:1270px;top:127px;font-size:14px;color:#eceded">31</div>
<div class="t" style="left:1356px;top:127px;font-size:14px;color:#eceded">33</div>
<div class="t" style="left:1441px;top:127px;font-size:14px;color:#eceded">35</div>
<div class="t" style="left:1527px;top:127px;font-size:14px;color:#eceded">37</div>

<!-- grid -->
<svg style="left:520px;top:165px;width:1077px;height:235px"><defs><pattern id="gl" patternUnits="userSpaceOnUse" x="17.750" y="0" width="42.850" height="235"><rect width="42.850" height="235" fill="#aeaeae"/><rect width="1" height="235" fill="#9e9e9e"/></pattern></defs><rect width="1077" height="235" fill="url(#gl)"/><path d="M0 55.500h1077M0 111.500h1077M0 166.500h1077M0 222.500h1077" stroke="#9e9e9e"/></svg>

<!-- tracks -->
<div style="left:0;top:0;width:520px;height:400px;overflow:hidden">
<div style="left:230px;top:165px;width:290px;height:235px;background:#25282b"></div>
<div class="rs" style="top:165px;background:#62823c"></div><div class="row" style="top:165px"></div>
<div class="rs" style="top:221px;background:#7f6f3c"></div><div class="row" style="top:221px"></div>
<div class="rs" style="top:277px;background:#3a7f48"></div><div class="row" style="top:277px"></div>
<div class="rs" style="top:332px;background:#3a7f7c"></div><div class="row" style="top:332px"></div>
<div class="rs" style="top:388px;background:#4a6c90"></div><div class="row" style="top:388px"></div>

<svg style="left:257px;top:184px;width:20px;height:16px"><use href="#wave"/></svg><div class="tn" style="left:295px;top:174px">Audio 3</div>
<div class="pb" style="left:295px;top:194px;width:44px;height:19px"></div><div style="left:317px;top:195px;width:1px;height:17px;background:#222"></div><div class="t c" style="left:306px;top:196px;font-size:16px;color:#9ea1a4">M</div><div class="t c" style="left:328px;top:196px;font-size:16px;color:#9ea1a4">S</div>
<div class="pb" style="left:347px;top:194px;width:44px;height:19px"></div><div style="left:369px;top:195px;width:1px;height:17px;background:#222"></div><div style="left:353px;top:199px;width:10px;height:10px;border-radius:50%;background:#c4c6c8"></div><div style="left:379px;top:198px;width:2px;height:11px;background:#c4c6c8"></div>
<div class="tf" style="top:196px"><u style="top:3px;width:26px"></u><u style="top:9px;width:26px"></u></div><div style="left:421px;top:192px;width:2px;height:20px;background:#c9cbcd"></div><div class="tm" style="left:441px;top:199px"></div>
<svg style="left:467px;top:170px;width:46px;height:46px"><use href="#knob"/></svg>

<svg style="left:257px;top:240px;width:20px;height:16px"><use href="#wave"/></svg><div class="tn" style="left:295px;top:230px">Audio 2</div>
<div class="pb" style="left:295px;top:250px;width:44px;height:19px"></div><div style="left:317px;top:251px;width:1px;height:17px;background:#222"></div><div class="t c" style="left:306px;top:252px;font-size:16px;color:#9ea1a4">M</div><div class="t c" style="left:328px;top:252px;font-size:16px;color:#9ea1a4">S</div>
<div class="pb" style="left:347px;top:250px;width:44px;height:19px"></div><div style="left:369px;top:251px;width:1px;height:17px;background:#222"></div><div style="left:353px;top:255px;width:10px;height:10px;border-radius:50%;background:#c4c6c8"></div><div style="left:379px;top:254px;width:2px;height:11px;background:#c4c6c8"></div>
<div class="tf" style="top:252px"><u style="top:3px;width:25px"></u><u style="top:9px;width:25px"></u></div><div style="left:421px;top:248px;width:2px;height:20px;background:#c9cbcd"></div><div class="tm" style="left:440px;top:255px"></div>
<svg style="left:467px;top:226px;width:46px;height:46px"><use href="#knob"/></svg>

<svg style="left:257px;top:295px;width:20px;height:16px"><use href="#wave"/></svg><div class="tn" style="left:295px;top:285px">Audio 4</div>
<div class="pb" style="left:295px;top:306px;width:44px;height:19px"></div><div style="left:317px;top:307px;width:1px;height:17px;background:#222"></div><div class="t c" style="left:306px;top:308px;font-size:16px;color:#9ea1a4">M</div><div class="t c" style="left:328px;top:308px;font-size:16px;color:#9ea1a4">S</div>
<div class="pb" style="left:347px;top:306px;width:44px;height:19px"></div><div style="left:369px;top:307px;width:1px;height:17px;background:#222"></div><div style="left:353px;top:311px;width:10px;height:10px;border-radius:50%;background:#c4c6c8"></div><div style="left:379px;top:310px;width:2px;height:11px;background:#c4c6c8"></div>
<div class="tf" style="top:308px"><u style="top:3px;width:29px"></u><u style="top:9px;width:29px"></u></div><div style="left:423px;top:304px;width:2px;height:20px;background:#c9cbcd"></div><div class="tm" style="left:442px;top:311px"></div><div class="tm" style="left:442px;top:317px"></div>
<svg style="left:467px;top:281px;width:46px;height:46px"><use href="#knob"/></svg>

<svg style="left:257px;top:351px;width:20px;height:16px"><use href="#wave"/></svg><div class="tn" style="left:295px;top:341px">Audio 5</div>
<div class="pb" style="left:295px;top:362px;width:44px;height:19px"></div><div style="left:317px;top:363px;width:1px;height:17px;background:#222"></div><div class="t c" style="left:306px;top:364px;font-size:16px;color:#9ea1a4">M</div><div class="t c" style="left:328px;top:364px;font-size:16px;color:#9ea1a4">S</div>
<div class="pb" style="left:347px;top:362px;width:44px;height:19px"></div><div style="left:369px;top:363px;width:1px;height:17px;background:#222"></div><div style="left:353px;top:367px;width:10px;height:10px;border-radius:50%;background:#c4c6c8"></div><div style="left:379px;top:366px;width:2px;height:11px;background:#c4c6c8"></div>
<div class="tf" style="top:363px"><u style="top:3px;width:36px"></u><u style="top:9px;width:36px"></u></div><div style="left:429px;top:360px;width:2px;height:20px;background:#c9cbcd"></div><div class="tm" style="left:450px;top:366px"></div><div class="tm" style="left:450px;top:372px"></div>
<svg style="left:467px;top:337px;width:46px;height:46px"><use href="#knob"/></svg>
<div class="tn" style="left:295px;top:396px">Audio 6</div>
<svg style="left:467px;top:395px;width:46px;height:46px"><use href="#knob"/></svg>
</div>
<div style="left:226px;top:400px;width:1374px;height:10px;background:#141517"></div>

<!-- mixer toolbar -->
<div class="bar" style="left:230px;top:410px;width:1368px;height:31px;border-radius:3px 3px 0 0"></div>
<div class="tg" style="left:239px;top:415px;width:36px"></div><svg style="left:245px;top:415px;width:24px;height:24px"><use href="#back"/></svg>
<div class="tg" style="left:285px;top:415px;width:233px"><div class="sp" style="left:65px"></div><div class="sp" style="left:159px"></div></div>
<div class="lb" style="left:297px;top:419.500px">Edit</div><svg style="left:335px;top:424px;width:9px;height:6px"><use href="#chev"/></svg>
<div class="lb" style="left:363px;top:419.500px">Options</div><svg style="left:428px;top:424px;width:9px;height:6px"><use href="#chev"/></svg>
<div class="lb" style="left:457px;top:419.500px">View</div><svg style="left:503px;top:424px;width:9px;height:6px"><use href="#chev"/></svg>
<div class="tg" style="left:778px;top:415px;width:188px"></div>
<div style="left:847px;top:416px;width:73px;height:21px;background:#3d94d6"></div>
<div class="lb c" style="left:812px;top:419.500px;color:#e6e8ea">Single</div>
<div class="lb c" style="left:883px;top:419.500px;color:#eef5fa">Tracks</div>
<div class="lb c" style="left:942px;top:419.500px;color:#e6e8ea">All</div>
<div style="left:975px;top:416px;width:531px;height:21px;background:#3d94d6;box-shadow:0 0 0 1px #474d54"></div>
<div style="left:1041px;top:416px;width:1px;height:21px;background:#2f6f9f"></div><div style="left:1095px;top:416px;width:1px;height:21px;background:#2f6f9f"></div><div style="left:1148px;top:416px;width:1px;height:21px;background:#2f6f9f"></div><div style="left:1201px;top:416px;width:1px;height:21px;background:#2f6f9f"></div><div style="left:1263px;top:416px;width:1px;height:21px;background:#2f6f9f"></div><div style="left:1339px;top:416px;width:1px;height:21px;background:#2f6f9f"></div><div style="left:1447px;top:416px;width:1px;height:21px;background:#2f6f9f"></div>
<div class="lb c" style="left:1008px;top:419.500px;color:#eef5fa">Audio</div>
<div class="lb c" style="left:1068px;top:419.500px;color:#eef5fa">Inst</div>
<div class="lb c" style="left:1121px;top:419.500px;color:#eef5fa">Aux</div>
<div class="lb c" style="left:1175px;top:419.500px;color:#eef5fa">Bus</div>
<div class="lb c" style="left:1232px;top:419.500px;color:#eef5fa">Input</div>
<div class="lb c" style="left:1301px;top:419.500px;color:#eef5fa">Output</div>
<div class="lb c" style="left:1393px;top:419.500px;color:#eef5fa">Master/VCA</div>
<div class="lb c" style="left:1476px;top:419.500px;color:#eef5fa">MIDI</div>
<div style="left:1516px;top:416px;width:36px;height:21px;background:#3d94d6"></div><div style="left:1552px;top:416px;width:36px;height:21px;background:#586069;box-shadow:0 0 0 1px #474d54"></div>
<svg style="left:1526px;top:420px;width:16px;height:14px"><path d="M1 1h14v12H1zM5.500 1v12M10.500 1v12" fill="none" stroke="#fff" stroke-width="1.600"/></svg>
<svg style="left:1562px;top:420px;width:16px;height:14px"><path d="M1 1h14v12H1zM8 1v12" fill="none" stroke="#fff" stroke-width="1.600"/></svg>

<!-- mixer -->
<div style="left:230px;top:442px;width:1212px;height:442px;background:#363b40"></div>
<div style="left:1442px;top:442px;width:155px;height:442px;background:#2a2e32"></div>
<div style="left:230px;top:0;width:90px;height:0">
<div class="lab2" style="top:453px">Output</div><div class="lab2" style="top:477px">Group</div><div class="lab2" style="top:503px;font-size:12.700px">Automation</div><div class="lab2" style="top:581px">Pan</div><div class="lab2" style="top:619px">dB</div>
</div>
<div style="left:230px;top:0;width:83px;height:0;font-size:10px;color:#7f8387">
<i class="lab2" style="top:656px;font-size:10px;color:#868a8e">6</i><i class="lab2" style="top:679px;font-size:10px;color:#868a8e">3</i><i class="lab2" style="top:699px;font-size:10px;color:#868a8e">0</i><i class="lab2" style="top:716px;font-size:10px;color:#868a8e">3</i><i class="lab2" style="top:729px;font-size:10px;color:#868a8e">6</i><i class="lab2" style="top:745px;font-size:10px;color:#868a8e">10</i><i class="lab2" style="top:759px;font-size:10px;color:#868a8e">15</i><i class="lab2" style="top:770px;font-size:10px;color:#868a8e">20</i><i class="lab2" style="top:786px;font-size:10px;color:#868a8e">30</i><i class="lab2" style="top:794px;font-size:10px;color:#868a8e">40</i><i class="lab2" style="top:805px;font-size:11px;color:#868a8e">∞</i>
</div>
<svg style="left:315px;top:658px;width:8px;height:154px"><path d="M0 3h8M0 26h8M0 46h8M0 63h8M0 76h8M0 92h8M0 106h8M0 117h8M0 133h8M0 141h8M0 152h8" stroke="#7d8185"/></svg>

<!-- fader tick symbol -->
<svg width="0" height="0" style="left:0;top:0"><defs>
<symbol id="ftk" viewBox="0 0 16 154"><path d="M1 26h5M9 26h5M1 63h5M9 63h5M1 76h5M9 76h5M1 106h5M9 106h5M1 117h5M9 117h5M1 133h5M9 133h5M1 141h5M9 141h5" stroke="#565a5e"/><path d="M1 46h5M9 46h5" stroke="#b8babc"/></symbol>
<symbol id="mt" viewBox="0 0 13 154"><path d="M2 3.500h10M2 23.500h10M2 63.500h10" stroke="#1d4a66"/><path d="M2 43.500h10" stroke="#8a8d90"/></symbol>
<symbol id="mt0" viewBox="0 0 13 154"><path d="M2 3.500h10M2 23.500h10" stroke="#1d4a66"/></symbol>
<symbol id="vu" viewBox="0 0 33 25"><rect width="33" height="25" rx="2" fill="#15171a"/><rect x="2" y="2" width="29" height="20" fill="#e8e8e2"/><path d="M5 9c6-4 16-4 23 0" fill="none" stroke="#555" stroke-width="1" stroke-dasharray="1 1"/><path d="M22 6.500c2 .5 4 1.500 6 2.500" fill="none" stroke="#c33" stroke-width="1"/><path d="M9 6l7 11" stroke="#333" stroke-width="1"/><path d="M11 22c0-8 11-8 11 0z" fill="#444"/></symbol>
<symbol id="stand" viewBox="0 0 24 30"><path d="M2 6L22 2M3 8L21 4" stroke="#b4b6b8" stroke-width="1.500"/><path d="M6 8l14 19M18 7L6 27M2 28l9-2M14 27l8 1" stroke="#222" stroke-width="1.500"/></symbol>
</defs></svg>

<div class="ch" style="left:326px"><div class="out">St Out</div><div class="grp"></div><div class="au rd">Read</div><svg class="wv"><use href="#wave"/></svg><svg class="kn"><use href="#knob"/></svg><div class="db a1">-6,0</div><div class="db a2">-3,7</div><div class="fl"></div><svg class="ft"><use href="#ftk"/></svg><div class="sc"><i>0</i><i>6</i><i>12</i><i>18</i><i>24</i><i>35</i><i>45</i><i>60</i></div><div class="m"><svg><use href="#mt0"/></svg><b style="top:38px"></b><b class="rr" style="top:42px"></b><div class="p red" style="top:17px"></div></div><div class="cap" style="top:713px"></div><div class="ir"></div><div class="ms mm">M</div><div class="ms ss">S</div><div class="lbl" style="background:#7c4330">Audio 1</div></div>
<div class="ch" style="left:400.400px"><div class="out">St Out</div><div class="grp"></div><div class="au to">Touch</div><svg class="wv"><use href="#wave"/></svg><svg class="kn"><use href="#knob"/></svg><div class="db a1">-17,0</div><div class="db a2">-15</div><div class="fl"></div><svg class="ft"><use href="#ftk"/></svg><div class="sc"><i>0</i><i>6</i><i>12</i><i>18</i><i>24</i><i>35</i><i>45</i><i>60</i></div><div class="m"><svg><use href="#mt"/></svg><b style="top:74px"></b><b class="rr" style="top:79px"></b><div class="p" style="top:53px"></div></div><div class="cap" style="top:749px"></div><div class="ir"></div><div class="ms mm">M</div><div class="ms ss">S</div><div class="lbl" style="background:#5f7c3a">Audio 3</div></div>
<div class="ch" style="left:474.800px"><div class="out">St Out</div><div class="grp"></div><div class="au la">Latch</div><svg class="wv"><use href="#wave"/></svg><svg class="kn"><use href="#knob"/></svg><div class="db a1">-17,0</div><div class="db a2">-16</div><div class="fl"></div><svg class="ft"><use href="#ftk"/></svg><div class="sc"><i>0</i><i>6</i><i>12</i><i>18</i><i>24</i><i>35</i><i>45</i><i>60</i></div><div class="m"><svg><use href="#mt"/></svg><b style="top:76px"></b><b class="rr" style="top:82px"></b></div><div class="cap" style="top:749px"></div><div class="ir"></div><div class="ms mm">M</div><div class="ms ss">S</div><div class="lbl" style="background:#7c6a38">Audio 2</div></div>
<div class="ch" style="left:549.200px"><div class="out">St Out</div><div class="grp"></div><div class="au wr">Write</div><svg class="wv"><use href="#wave"/></svg><svg class="kn"><use href="#knob"/></svg><div class="db a1">-14,8</div><div class="db a2">-14</div><div class="fl"></div><svg class="ft"><use href="#ftk"/></svg><div class="sc"><i>0</i><i>6</i><i>12</i><i>18</i><i>24</i><i>35</i><i>45</i><i>60</i></div><div class="m"><svg><use href="#mt"/></svg><b style="top:66px"></b><b class="rr" style="top:65px"></b><div class="p" style="top:48px"></div><div class="p rr" style="top:48px"></div></div><div class="cap" style="top:743px"></div><div class="ir"></div><div class="ms mm">M</div><div class="ms ss">S</div><div class="lbl" style="background:#367a44">Audio 4</div></div>
<div class="ch" style="left:623.600px"><div class="out">St Out</div><div class="grp"></div><div class="au rd0">Read</div><svg class="wv"><use href="#wave"/></svg><svg class="kn"><use href="#knob"/></svg><div class="db a1">-8,8</div><div class="db a2">-6,9</div><div class="fl"></div><svg class="ft"><use href="#ftk"/></svg><div class="sc"><i>0</i><i>6</i><i>12</i><i>18</i><i>24</i><i>35</i><i>45</i><i>60</i></div><div class="m"><svg><use href="#mt"/></svg><b style="top:46px"></b><b class="rr" style="top:46px"></b><div class="p" style="top:26px"></div><div class="p rr" style="top:26px"></div></div><div class="cap" style="top:726px"></div><div class="ir"></div><div class="ms mm">M</div><div class="ms ss">S</div><div class="lbl" style="background:#3a7c7a">Audio 5</div></div>
<div class="ch" style="left:698px"><div class="out">St Out</div><div class="grp"></div><div class="au rd0">Read</div><svg class="wv"><use href="#wave"/></svg><svg class="kn"><use href="#knob"/></svg><div class="db a1">-16,8</div><div class="db a2">-3,7</div><div class="fl"></div><svg class="ft"><use href="#ftk"/></svg><div class="sc"><i>0</i><i>6</i><i>12</i><i>18</i><i>24</i><i>35</i><i>45</i><i>60</i></div><div class="m"><svg><use href="#mt"/></svg><b style="top:39px"></b><b class="rr" style="top:46px"></b><div class="p red" style="top:18px"></div></div><div class="cap" style="top:749px"></div><div class="ir"></div><div class="ms mm">M</div><div class="ms ss">S</div><div class="lbl" style="background:#4a6c90">Audio 6</div></div>
<div class="ch" style="left:772.400px"><div class="out">St Out</div><div class="grp"></div><div class="au rd0">Read</div><svg class="wv"><use href="#wave"/></svg><svg class="kn"><use href="#knob"/></svg><div class="db a1">-17,0</div><div class="db a2">-15</div><div class="fl"></div><svg class="ft"><use href="#ftk"/></svg><div class="sc"><i>0</i><i>6</i><i>12</i><i>18</i><i>24</i><i>35</i><i>45</i><i>60</i></div><div class="m"><svg><use href="#mt"/></svg><b style="top:73px"></b><b class="rr" style="top:73px"></b><div class="p" style="top:54px"></div><div class="p rr" style="top:54px"></div></div><div class="cap" style="top:749px"></div><div class="ir"></div><div class="ms mm">M</div><div class="ms ss">S</div><div class="lbl" style="background:#5a4a90">Audio 7</div></div>
<div class="ch" style="left:846.800px"><div class="out">St Out</div><div class="grp"></div><div class="au rd0">Read</div><svg class="wv"><use href="#wave"/></svg><svg class="kn"><use href="#knob"/></svg><div class="db a1">-17,0</div><div class="db a2">-15</div><div class="fl"></div><svg class="ft"><use href="#ftk"/></svg><div class="sc"><i>0</i><i>6</i><i>12</i><i>18</i><i>24</i><i>35</i><i>45</i><i>60</i></div><div class="m"><svg><use href="#mt"/></svg><b style="top:73px"></b><b class="rr" style="top:73px"></b><div class="p" style="top:54px"></div><div class="p rr" style="top:54px"></div></div><div class="cap" style="top:749px"></div><div class="ir"></div><div class="ms mm">M</div><div class="ms ss">S</div><div class="lbl" style="background:#5a4a90">Audio 8</div></div>
<div class="ch" style="left:921.200px"><div class="out">St Out</div><div class="grp"></div><div class="au rd0">Read</div><svg class="wv"><use href="#wave"/></svg><svg class="kn"><use href="#knob"/></svg><div class="db a1">-17,0</div><div class="db a2">-15</div><div class="fl"></div><svg class="ft"><use href="#ftk"/></svg><div class="sc"><i>0</i><i>6</i><i>12</i><i>18</i><i>24</i><i>35</i><i>45</i><i>60</i></div><div class="m"><svg><use href="#mt"/></svg><b style="top:73px"></b><b class="rr" style="top:73px"></b><div class="p" style="top:54px"></div><div class="p rr" style="top:54px"></div></div><div class="cap" style="top:749px"></div><div class="ir"></div><div class="ms mm">M</div><div class="ms ss">S</div><div class="lbl" style="background:#5a4a90">Audio 9</div></div>
<div class="ch" style="left:995.600px"><div class="out">St Out</div><div class="grp"></div><div class="au rd0">Read</div><svg class="wv"><use href="#wave"/></svg><svg class="kn"><use href="#knob"/></svg><div class="db a1">-17,0</div><div class="db a2">-15</div><div class="fl"></div><svg class="ft"><use href="#ftk"/></svg><div class="sc"><i>0</i><i>6</i><i>12</i><i>18</i><i>24</i><i>35</i><i>45</i><i>60</i></div><div class="m"><svg><use href="#mt"/></svg><b style="top:73px"></b><b class="rr" style="top:73px"></b><div class="p" style="top:54px"></div><div class="p rr" style="top:54px"></div></div><div class="cap" style="top:749px"></div><div class="ir"></div><div class="ms mm">M</div><div class="ms ss">S</div><div class="lbl" style="background:#5a4a90">Audio 10</div></div>
<div class="ch" style="left:1070px"><div class="out">St Out</div><div class="grp"></div><div class="au rd0">Read</div><svg style="left:25px;top:526px;width:24px;height:30px"><use href="#stand"/></svg><svg class="kn"><use href="#knob"/></svg><div class="db a1">0,0</div><div class="db a2">-16</div><div class="fl"></div><svg class="ft"><use href="#ftk"/></svg><div class="sc"><i>0</i><i>6</i><i>12</i><i>18</i><i>24</i><i>35</i><i>45</i><i>60</i></div><div class="m"><svg><use href="#mt"/><path d="M2 83.500h10M2 103.500h10M2 106.500h10" stroke="#1d4a66"/></svg><b style="top:141px"></b><b class="rr" style="top:141px"></b><div class="p" style="top:129px"></div><div class="p rr" style="top:129px"></div></div><div class="cap" style="top:683px"></div><div class="ms mm">M</div><div class="ms ss">S</div><div class="lbl" style="background:#377b43">#default</div></div>
<div class="ch" style="left:1144.400px"><div class="out">St Out</div><div class="grp"></div><div class="au rd0">Read</div><svg style="left:22px;top:531px;width:33px;height:25px"><use href="#vu"/></svg><svg class="kn"><use href="#knob"/></svg><div class="db a1">-4,7</div><div class="db a2">-9,9</div><div class="fl"></div><svg class="ft"><use href="#ftk"/></svg><div class="sc"><i>0</i><i>6</i><i>12</i><i>18</i><i>24</i><i>35</i><i>45</i><i>60</i></div><div class="m"><svg><use href="#mt"/></svg><b style="top:60px"></b><b class="rr" style="top:60px"></b></div><div class="cap" style="top:709px"></div><div class="ms mm">M</div><div class="ms ss">S</div><div class="lbl" style="background:#7a7a3a">Aux 1</div></div>
<div class="ch" style="left:1218.800px"><div class="out">St Out</div><div class="grp"></div><div class="au rd0">Read</div><svg style="left:22px;top:531px;width:33px;height:25px"><use href="#vu"/></svg><svg class="kn"><use href="#knob"/></svg><div class="db a1">0,0</div><div class="db a2">-9,7</div><div class="fl"></div><svg class="ft"><use href="#ftk"/></svg><div class="sc"><i>0</i><i>6</i><i>12</i><i>18</i><i>24</i><i>35</i><i>45</i><i>60</i></div><div class="m"><svg><use href="#mt"/></svg><b style="top:60px"></b><b class="rr" style="top:64px"></b></div><div class="cap" style="top:683px"></div><div class="ms mm">M</div><div class="ms ss">S</div><div class="lbl" style="background:#7a7a3a">Aux 2</div></div>
<div class="ch" style="left:1293.200px"><div class="grp"></div><div class="au rd0">Read</div><svg class="wv"><use href="#wave"/></svg><svg class="kn"><use href="#knob"/></svg><div class="db a1">-16,0</div><div class="db a2">-5,3</div><div class="fl"></div><svg class="ft"><use href="#ftk"/></svg><div class="sc"><i>0</i><i>6</i><i>12</i><i>18</i><i>24</i><i>35</i><i>45</i><i>60</i></div><div class="m"><svg><use href="#mt"/></svg><b style="top:45px"></b><b class="rr" style="top:45px"></b></div><div class="cap" style="top:747px"></div><div class="bnc" style="left:42px;top:819px;width:25px;height:17px;font-size:9.500px">BNC</div><div class="ms mm">M</div><div class="ms ss">S</div><div class="lbl" style="background:#7b3370">Stereo Out</div></div>
<div class="ch" style="left:1367.600px"><div class="grp"></div><div class="au rd0">Read</div><svg class="wv"><use href="#wave"/></svg><div class="db a1" style="width:62px">1,4</div><div class="fl" style="left:28px"></div><svg class="ft" style="left:21px"><use href="#ftk"/></svg><div class="cap" style="left:19px;top:675px"></div><div class="ms mm">M</div><div class="ms ss">D</div><div class="lbl" style="background:#5e3f88;width:74.400px">Master</div></div>
<div class="dv" style="left:325px"></div><div class="dv" style="left:399.400px;width:1.500px"></div><div class="dv" style="left:473.800px;width:1.500px"></div><div class="dv" style="left:548.200px;width:1.500px"></div><div class="dv" style="left:622.600px;width:1.500px"></div><div class="dv" style="left:697px;width:1.500px"></div><div class="dv" style="left:771.400px;width:1.500px"></div><div class="dv" style="left:845.800px;width:1.500px"></div><div class="dv" style="left:920.200px;width:1.500px"></div><div class="dv" style="left:994.600px;width:1.500px"></div><div class="dv" style="left:1069px;width:1.500px"></div><div class="dv" style="left:1143.400px;width:1.500px"></div><div class="dv" style="left:1217.800px;width:1.500px"></div><div class="dv" style="left:1292.200px;width:1.500px"></div><div class="dv" style="left:1366.600px;width:1.500px"></div><div class="dv" style="left:1441px;width:1.500px"></div>

<!-- transport window -->
<div style="left:0;top:884px;width:1600px;height:25px;background:linear-gradient(#e8e8e8,#c9c9ca);border-radius:5px 5px 0 0"></div>
<div style="left:0;top:909px;width:1600px;height:60px;background:#121314"></div>
<div style="left:0;top:969px;width:1600px;height:4px;background:#4d5359"></div>
<div style="left:0;top:973px;width:1600px;height:3px;background:#1b1c1e"></div>
<div style="left:9px;top:891px;width:13px;height:13px;border-radius:50%;background:#f35e56"></div><div style="left:13.500px;top:895.500px;width:4px;height:4px;border-radius:50%;background:#5e1510"></div>
<div style="left:31px;top:891px;width:13px;height:13px;border-radius:50%;background:#fdbc40"></div>
<div style="left:54px;top:891px;width:13px;height:13px;border-radius:50%;background:#34c84a"></div>
<div class="t" style="left:736px;top:891.500px;font-size:14.500px;color:#4e5052">Project - Transport</div>

<div class="g" style="left:123px;top:925px;width:284px;height:36px">
<div class="b" style="left:0;width:49px"></div><div class="b" style="left:49px;width:49px"></div><div class="b" style="left:98px;width:49px"></div><div class="b gn" style="left:147px;width:49px"></div><div class="b" style="left:196px;width:49px"></div><div class="b bl" style="left:245px;width:39px"></div>
</div>
<svg style="left:133px;top:929px;width:28px;height:28px"><use href="#rew"/></svg>
<svg style="left:182px;top:929px;width:28px;height:28px"><use href="#ff"/></svg>
<svg style="left:231px;top:929px;width:28px;height:28px"><use href="#stop"/></svg>
<svg style="left:280px;top:929px;width:28px;height:28px"><use href="#play"/></svg>
<svg style="left:329px;top:929px;width:28px;height:28px"><use href="#rec"/></svg>
<svg style="left:370px;top:931px;width:34px;height:24px"><use href="#loop"/></svg>

<div style="left:418px;top:916px;width:764px;height:52px;border:2px solid #2e3135;background:#0f1011"></div>
<div class="t" style="left:424px;top:919.500px;font-size:23.200px;color:#c2c4c6">01:00:11:20.25</div>
<div class="t d" style="left:594px;top:919.500px;font-size:22.500px">000</div>
<div class="t c" style="left:638px;top:919.500px;font-size:22.500px;color:#c2c4c6">3</div>
<div class="t c" style="left:662px;top:919.500px;font-size:22.500px;color:#c2c4c6">1</div>
<div class="t c" style="left:686px;top:919.500px;font-size:22.500px;color:#c2c4c6">1</div>
<div class="t d" style="left:704px;top:919.500px;font-size:22.500px">00</div>
<div class="t c" style="left:736px;top:919.500px;font-size:22.500px;color:#c2c4c6">1</div>
<div class="t" style="left:765px;top:919.500px;font-size:23.200px;color:#c2c4c6">70,0000</div>
<div class="t" style="left:887px;top:919.500px;font-size:22.500px;color:#c2c4c6">4/4</div>
<div class="t" style="left:953px;top:923px;font-size:17px;color:#c9cbcd">No In</div>
<div class="t d" style="left:426px;top:945px;font-size:22.500px">000</div>
<div class="t c" style="left:472px;top:945px;font-size:22.500px;color:#c2c4c6">4</div>
<div class="t c" style="left:495px;top:945px;font-size:22.500px;color:#c2c4c6">2</div>
<div class="t c" style="left:519px;top:945px;font-size:22.500px;color:#c2c4c6">4</div>
<div class="t c d" style="left:541px;top:945px;font-size:22.500px">0</div>
<div class="t c" style="left:563px;top:945px;font-size:22.500px;color:#c2c4c6">31</div>
<div class="t d" style="left:594px;top:945px;font-size:22.500px">00</div>
<div class="t c" style="left:631px;top:945px;font-size:22.500px;color:#c2c4c6">11</div>
<div class="t c" style="left:662px;top:945px;font-size:22.500px;color:#c2c4c6">1</div>
<div class="t c" style="left:686px;top:945px;font-size:22.500px;color:#c2c4c6">1</div>
<div class="t d" style="left:704px;top:945px;font-size:22.500px">00</div>
<div class="t c" style="left:736px;top:945px;font-size:22.500px;color:#c2c4c6">1</div>
<div class="t" style="left:760px;top:948.500px;font-size:17px;color:#c9cbcd">Keep Tempo</div>
<div class="t" style="left:898px;top:945px;font-size:22px;color:#c2c4c6">/16</div>
<div class="t" style="left:953px;top:948.500px;font-size:17px;color:#c9cbcd">No Out</div>
<div class="t" style="left:1082px;top:924px;font-size:10px;color:#bcbec0">CPU</div>
<div style="left:1109px;top:927px;width:51px;height:5px;background:#2d3135"></div><div style="left:1109px;top:927px;width:3px;height:5px;background:#58acdc"></div>
<div class="t" style="left:1084px;top:951px;font-size:10px;color:#bcbec0">HD</div>
<div style="left:1109px;top:954px;width:51px;height:5px;background:#2d3135"></div>
<svg style="left:1168px;top:939px;width:10px;height:6px"><use href="#chev"/></svg>

<div class="g" style="left:1193px;top:925px;width:120px;height:36px"><div class="b" style="left:0;width:40px"></div><div class="b" style="left:40px;width:40px"></div></div>
<svg style="left:1199px;top:929px;width:28px;height:28px"><use href="#shield"/></svg>
<svg style="left:1239px;top:929px;width:28px;height:28px"><use href="#fork"/></svg>
<svg style="left:1279px;top:929px;width:28px;height:28px"><use href="#sq"/></svg>
<div class="g" style="left:1324px;top:925px;width:80px;height:36px"><div class="b" style="left:0;width:40px"></div><div class="b bl" style="left:40px;width:40px"></div></div>
<div class="t c" style="left:1344px;top:936px;font-size:14px;color:#d0d3d6"><span style="position:static;display:inline;font-size:11px">12</span>34</div>
<svg style="left:1370px;top:929px;width:28px;height:28px"><use href="#metro"/></svg>
<div style="left:1421px;top:936px;width:154px;height:16px;background:#2d3135"></div>
<div style="left:1424px;top:938px;width:106px;height:5px;background:#58acdc"></div>
<div style="left:1424px;top:945px;width:105px;height:4px;background:#58acdc"></div>
<div style="left:1536px;top:936px;width:2px;height:16px;background:#bbb"></div>
</body></html>
